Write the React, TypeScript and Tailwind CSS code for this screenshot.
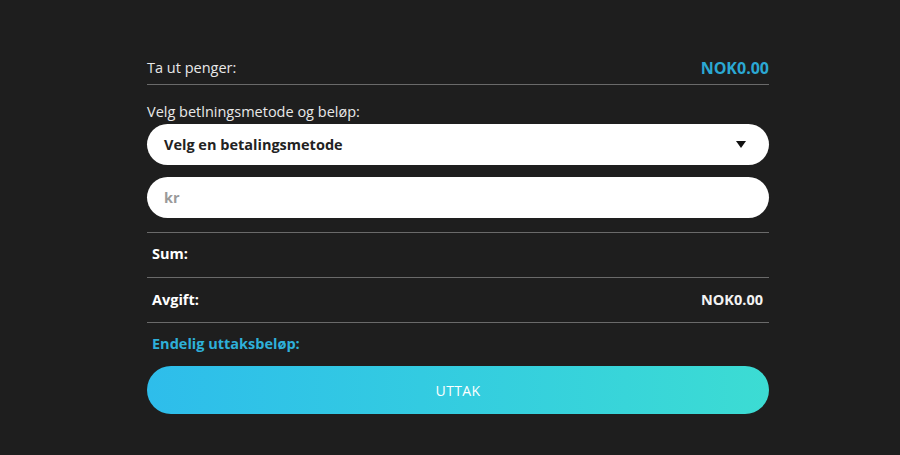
import React from "react";

const App = () => {
  return (
    <div
      className="w-[900px] h-[455px] bg-[#1e1e1e] pt-[58px]"
      style={{ fontFamily: '"Open Sans", sans-serif' }}
    >
      <div className="ml-[147px] w-[622px] flex flex-col">
        {/* header */}
        <div className="flex justify-between items-end pb-[6px] border-b border-[#6a6a6a]">
          <span className="text-[14.5px] leading-[20px] text-[#e8e8e8]">Ta ut penger:</span>
          <span className="text-[16px] leading-[20px] font-bold text-[#2ba8d3]">NOK0.00</span>
        </div>

        <p className="mt-[17px] text-[14.5px] leading-[20px] text-[#e8e8e8]">
          Velg betlningsmetode og beløp:
        </p>

        {/* payment method select */}
        <div className="mt-[2px] h-[41px] rounded-full bg-white flex items-center justify-between pl-[17px] pr-[23px]">
          <span className="text-[14.5px] font-bold text-[#222]">Velg en betalingsmetode</span>
          <svg width="10" height="7" viewBox="0 0 10 7">
            <path d="M0 0 L10 0 L5 7 Z" fill="#111" />
          </svg>
        </div>

        {/* amount */}
        <input
          type="text"
          placeholder="kr"
          className="mt-[12px] h-[41px] rounded-full bg-white pl-[17px] text-[14.5px] font-bold text-[#222] placeholder:text-[#9a9a9a] outline-none"
        />

        {/* summary */}
        <div className="mt-[14px] border-t border-[#6a6a6a]">
          <div className="h-[44px] pb-[2px] flex items-center justify-between px-[5px] text-[14.5px] font-bold text-white">
            <span>Sum:</span>
            <span></span>
          </div>
          <div className="h-[45px] pb-[1px] border-t border-[#6a6a6a] flex items-center justify-between pl-[5px] pr-[6px] text-[14.5px] font-bold text-white">
            <span>Avgift:</span>
            <span className="text-[#f2f2f2]">NOK0.00</span>
          </div>
          <div className="border-t border-[#6a6a6a]"></div>
        </div>

        <p className="mt-[11px] pl-[5px] text-[14.5px] leading-[20px] font-bold text-[#2eb0d9]">
          Endelig uttaksbeløp:
        </p>

        <button className="mt-[12px] h-[48px] rounded-full bg-gradient-to-r from-[#2ebdeb] to-[#3cdcd3] text-[14px] text-white tracking-wide">
          UTTAK
        </button>
      </div>
    </div>
  );
};

export default App;
